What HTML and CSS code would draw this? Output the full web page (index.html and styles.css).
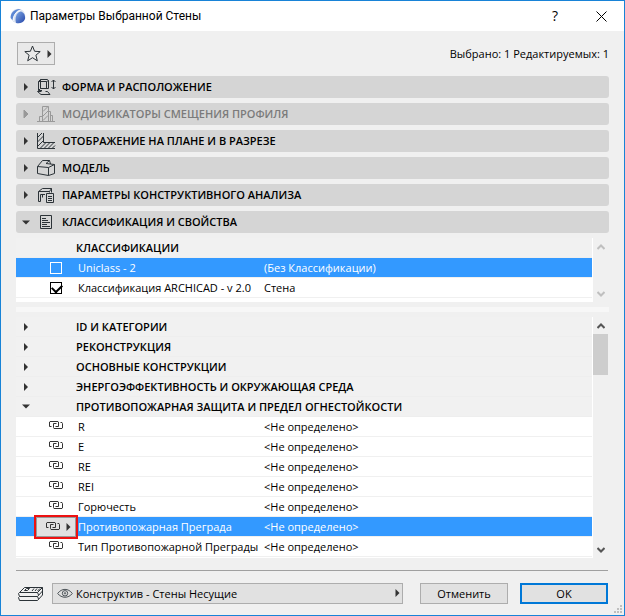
FILE: index.html
```html
<!DOCTYPE html>
<html lang="ru">
<head>
    <meta charset="UTF-8">
    <meta name="viewport" content="width=device-width, initial-scale=1.0">
    <title>Параметры Выбранной Стены</title>
    <link rel="stylesheet" href="styles.css">
</head>
<body>
    <!-- shared icons -->
    <svg class="sprite" width="0" height="0" aria-hidden="true">
        <symbol id="arrow-right" viewBox="0 0 5 8"><path d="M0.5 0 L4.5 4 L0.5 8 Z" fill="currentColor"/></symbol>
        <symbol id="arrow-down" viewBox="0 0 8 5"><path d="M0 0.5 L8 0.5 L4 4.5 Z" fill="currentColor"/></symbol>
        <symbol id="link" viewBox="0 0 14 8">
            <path d="M2.5 5.5 H0.5 V1 L1 0.5 H9 L9.5 1 V5.5 H6.5 M7.5 2.5 H4.5 V6.5 L5 7.5 H13 L13.5 7 V2.5 L13 1.5 H11.5" fill="none" stroke="currentColor"/>
        </symbol>
        <symbol id="chevron-up" viewBox="0 0 8 6"><path d="M0.5 5 L4 1.5 L7.5 5" fill="none" stroke="currentColor" stroke-width="2"/></symbol>
        <symbol id="chevron-down" viewBox="0 0 8 6"><path d="M0.5 1 L4 4.5 L7.5 1" fill="none" stroke="currentColor" stroke-width="2"/></symbol>
    </svg>

    <div class="dialog">
        <header class="titlebar">
            <svg class="logo" width="16" height="16" viewBox="0 0 16 16">
                <defs>
                    <linearGradient id="logo-fill" x1="0" y1="0" x2="1" y2="1">
                        <stop offset="0" stop-color="#7fa9e6"/>
                        <stop offset="1" stop-color="#2445a8"/>
                    </linearGradient>
                </defs>
                <circle cx="8" cy="8" r="7.3" fill="#dbe3f1"/>
                <path d="M6 15 C4.5 10 6.5 4.5 10.5 3.5 C14 4 15.6 8 15 11 C13.5 15 9.5 15.8 6 15 Z" fill="url(#logo-fill)"/>
                <path d="M0.6 10 C0.5 4 5.5 0.3 11 1 C6.5 2.5 3.5 6 2.8 12.5 Z" fill="#5b86d3"/>
                <path d="M3 13 C3.2 7.5 6 3.5 10.5 2.6" fill="none" stroke="#fff" stroke-width="0.9"/>
            </svg>
            <h1>Параметры Выбранной Стены</h1>
            <button class="window-button" aria-label="Справка">?</button>
            <button class="window-button" aria-label="Закрыть">
                <svg width="11" height="11" viewBox="0 0 11 11"><path d="M0.5 0.5 L10.5 10.5 M10.5 0.5 L0.5 10.5" stroke="#000" fill="none"/></svg>
            </button>
        </header>

        <main class="content">
            <div class="toolbar">
                <button class="favorites" aria-label="Избранное">
                    <svg width="17" height="17" viewBox="0 0 17 17"><path d="M8.5 1 L10.6 6.3 L16.2 6.6 L11.9 10.2 L13.3 15.8 L8.5 12.7 L3.7 15.8 L5.1 10.2 L0.8 6.6 L6.4 6.3 Z" fill="none" stroke="#2c3338"/></svg>
                    <svg width="5" height="8"><use href="#arrow-right"/></svg>
                </button>
                <span>Выбрано: 1 Редактируемых: 1</span>
            </div>

            <div class="sections">
                <button class="section">
                    <svg class="marker" width="8" height="8"><use href="#arrow-right"/></svg>
                    <svg class="section-icon" width="19" height="18" viewBox="0 0 19 18">
                        <path d="M3.5 1.5 H10.5 L11.5 2.5 V10.5 H3.5 Z M3.5 1.5 L1.5 3.5 V12.5 L3.5 10.5 M1.5 3.5 H9.5 L11.5 2.5 M9.5 3.5 V10.5 M1.5 12.5 H5 M4.5 13.5 H0.5 L4 16.5 H13 L10.5 13.5 H8.5 M16.5 2 V11 M14.5 4 L16.5 2 L18.5 4 M14.5 9 L16.5 11 L18.5 9"/>
                    </svg>
                    Форма и расположение
                </button>
                <button class="section" disabled>
                    <svg class="marker" width="8" height="8"><use href="#arrow-right"/></svg>
                    <svg class="section-icon" width="19" height="18" viewBox="0 0 19 18">
                        <path d="M0 16.5 H18 M5.5 16 V1.5 H11.5 V16 M11.5 6.5 H13.5 V16 M13.5 10.5 H15.5 V16 M5.5 11.5 H2.5 V16 M6 6.5 L11 1.5 M6 11 L11 6 M6 15.5 L11 10.5"/>
                    </svg>
                    Модификаторы смещения профиля
                </button>
                <button class="section">
                    <svg class="marker" width="8" height="8"><use href="#arrow-right"/></svg>
                    <svg class="section-icon" width="19" height="18" viewBox="0 0 19 18">
                        <path d="M0.5 1 V16.5 H18 M6.5 1 V10.5 H18 M0.5 5.5 L5 1 M0.5 10 L6.5 4 M0.5 14.5 L6.5 8.5 M3.5 16 L9 10.5 M7.5 16 L13 10.5 M11.5 16 L17 10.5 M15.5 16 L18 13.5"/>
                    </svg>
                    Отображение на плане и в разрезе
                </button>
                <button class="section">
                    <svg class="marker" width="8" height="8"><use href="#arrow-right"/></svg>
                    <svg class="section-icon" width="19" height="18" viewBox="0 0 19 18">
                        <path d="M0.5 7.5 L5.5 1.5 H12.5 L9 4.5 L17.5 5.5 V14.5 L11.5 16.5 L0.5 14.5 Z M0.5 7.5 L11.5 8.5 V16.5 M11.5 8.5 L17.5 5.5 M12.5 1.5 L13.5 5"/>
                    </svg>
                    Модель
                </button>
                <button class="section">
                    <svg class="marker" width="8" height="8"><use href="#arrow-right"/></svg>
                    <svg class="section-icon" width="19" height="18" viewBox="0 0 19 18">
                        <path d="M1.5 5.5 L5.5 2.5 H14.5 L12.5 5.5 Z M1.5 5.5 V15.5 H3.5 V8.5 H8 M5.5 8.5 V11.5 M14.5 2.5 V6.5 M12.5 5.5 V6.5 M9.5 7.5 H16.5 V16.5 H9.5 Z M11 10.5 H15 M11 12.5 H15 M11 14.5 H15"/>
                    </svg>
                    Параметры конструктивного анализа
                </button>
                <button class="section" aria-expanded="true">
                    <svg class="marker" width="8" height="5"><use href="#arrow-down"/></svg>
                    <svg class="section-icon" width="19" height="18" viewBox="0 0 19 18">
                        <path d="M3.5 2.5 H14.5 V15.5 H3.5 Z M5 5.5 H9 M5 7.5 H11 M5 9.5 H13 M5 11.5 H10 M5 13.5 H13"/>
                    </svg>
                    Классификация и свойства
                </button>
            </div>

            <div class="list classifications">
                <table>
                    <tbody>
                        <tr class="group"><td class="tool"></td><th colspan="2">Классификации</th></tr>
                        <tr class="selected">
                            <td class="tool"><input type="checkbox" id="uniclass"></td>
                            <td class="name"><label for="uniclass">Uniclass - 2</label></td>
                            <td>(Без Классификации)</td>
                        </tr>
                        <tr>
                            <td class="tool"><input type="checkbox" id="archicad" checked></td>
                            <td class="name"><label for="archicad">Классификация ARCHICAD - v 2.0</label></td>
                            <td>Стена</td>
                        </tr>
                    </tbody>
                </table>
                <div class="scrollbar scrollbar-off">
                    <svg width="8" height="6"><use href="#chevron-up"/></svg>
                    <svg width="8" height="6"><use href="#chevron-down"/></svg>
                </div>
            </div>

            <div class="splitter"></div>

            <div class="list">
                <table>
                    <tbody>
                        <tr class="group"><td class="tool"><svg width="8" height="8"><use href="#arrow-right"/></svg></td><th colspan="2">ID и категории</th></tr>
                        <tr class="group"><td class="tool"><svg width="8" height="8"><use href="#arrow-right"/></svg></td><th colspan="2">Реконструкция</th></tr>
                        <tr class="group"><td class="tool"><svg width="8" height="8"><use href="#arrow-right"/></svg></td><th colspan="2">Основные конструкции</th></tr>
                        <tr class="group"><td class="tool"><svg width="8" height="8"><use href="#arrow-right"/></svg></td><th colspan="2">Энергоэффективность и окружающая среда</th></tr>
                        <tr class="group"><td class="tool"><svg width="8" height="5"><use href="#arrow-down"/></svg></td><th colspan="2">Противопожарная защита и предел огнестойкости</th></tr>
                        <tr><td class="tool"><svg class="link" width="14" height="8"><use href="#link"/></svg></td><td class="name">R</td><td>&lt;Не определено&gt;</td></tr>
                        <tr><td class="tool"><svg class="link" width="14" height="8"><use href="#link"/></svg></td><td class="name">E</td><td>&lt;Не определено&gt;</td></tr>
                        <tr><td class="tool"><svg class="link" width="14" height="8"><use href="#link"/></svg></td><td class="name">RE</td><td>&lt;Не определено&gt;</td></tr>
                        <tr><td class="tool"><svg class="link" width="14" height="8"><use href="#link"/></svg></td><td class="name">REI</td><td>&lt;Не определено&gt;</td></tr>
                        <tr><td class="tool"><svg class="link" width="14" height="8"><use href="#link"/></svg></td><td class="name">Горючесть</td><td>&lt;Не определено&gt;</td></tr>
                        <tr class="selected">
                            <td class="tool">
                                <button class="link-button" aria-label="Связь свойства">
                                    <svg class="link" width="14" height="8"><use href="#link"/></svg>
                                    <svg width="5" height="8"><use href="#arrow-right"/></svg>
                                </button>
                            </td>
                            <td class="name">Противопожарная Преграда</td>
                            <td>&lt;Не определено&gt;</td>
                        </tr>
                        <tr><td class="tool"><svg class="link" width="14" height="8"><use href="#link"/></svg></td><td class="name">Тип Противопожарной Преграды</td><td>&lt;Не определено&gt;</td></tr>
                    </tbody>
                </table>
                <div class="scrollbar">
                    <svg width="8" height="6"><use href="#chevron-up"/></svg>
                    <div class="thumb"></div>
                    <svg width="8" height="6"><use href="#chevron-down"/></svg>
                </div>
            </div>

            <footer class="footer">
                <svg class="layers" width="26" height="16" viewBox="0 0 26 16" fill="none" stroke="#2c3338">
                    <path d="M6.5 1.5 H24.5 L19.5 6.5 H1.5 Z M1.5 6.5 L0.5 7.5 L1.5 10.5 H19.5 L24.5 5 V1.5 M1.5 10.5 L0.5 11.5 L1.5 14.5 H19.5 L24.5 9 V5 M8.5 2.5 H11.5 L9.5 4.5 H6.5 Z M16 2.5 L14 5 M19 2.5 L17 5 M22 2.5 L19.5 5 M19.5 6.5 L20.5 9 M19.5 10.5 L20.5 13"/>
                </svg>
                <div class="layer-field">
                    <svg class="eye" width="16" height="11" viewBox="0 0 16 11" fill="none" stroke="#4d5459">
                        <path d="M0.7 5.5 C4.5 0 11.5 0 15.3 5.5 C11.5 10.5 4.5 10.5 0.7 5.5 Z"/>
                        <circle cx="8" cy="5.3" r="2.7"/>
                        <circle cx="8" cy="5.3" r="0.7"/>
                    </svg>
                    <select aria-label="Слой">
                        <option>Конструктив - Стены Несущие</option>
                    </select>
                    <svg class="layer-arrow" width="5" height="8"><use href="#arrow-right"/></svg>
                </div>
                <button class="action">Отменить</button>
                <button class="action action-default">OK</button>
            </footer>
        </main>

        <svg class="grip" width="8" height="8" viewBox="0 0 8 8" fill="#bfbfbf">
            <path d="M6 0h2v2h-2z M3 3h2v2h-2z M6 3h2v2h-2z M0 6h2v2h-2z M3 6h2v2h-2z M6 6h2v2h-2z"/>
        </svg>
    </div>
</body>
</html>
```

FILE: styles.css
```css
* {
    box-sizing: border-box;
}

body {
    margin: 0;
    font-family: "Open Sans", "Noto Sans", sans-serif;
    font-size: 11px;
    line-height: 16px;
    color: #000;
    background-color: #f0f0f0;
}

button,
select {
    font: inherit;
    color: inherit;
    margin: 0;
}

svg {
    display: block;
    flex: none;
}

.sprite {
    position: absolute;
}

.dialog {
    position: relative;
    min-height: 100vh;
    border: 1px solid #1883d7;
    background-color: #f0f0f0;
}

/* title bar */
.titlebar {
    display: flex;
    align-items: center;
    height: 30px;
    padding-left: 9px;
    background-color: #fff;
}

.titlebar h1 {
    flex: 1;
    margin: 0 0 0 4px;
    font-family: Roboto, "Open Sans", sans-serif;
    font-size: 12px;
    font-weight: normal;
}

.window-button {
    display: flex;
    align-items: center;
    justify-content: center;
    width: 46px;
    height: 30px;
    padding: 0;
    border: none;
    background: none;
    font-size: 14px;
}

.content {
    padding: 11px 15px 0;
}

.toolbar {
    display: flex;
    align-items: center;
    justify-content: space-between;
    padding-left: 1px;
}

.favorites {
    display: flex;
    align-items: center;
    gap: 6px;
    width: 38px;
    height: 23px;
    padding: 0 6px;
    border: 1px solid #adadad;
    background-color: #e9e9e9;
    color: #333;
}

/* collapsible sections */
.sections {
    display: flex;
    flex-direction: column;
    gap: 5px;
    margin: 11px 0 5px;
}

.section {
    display: flex;
    align-items: center;
    height: 22px;
    padding: 0 8px;
    border: none;
    border-radius: 3px;
    background-color: #d5d5d5;
    font-weight: 600;
    text-transform: uppercase;
    white-space: nowrap;
}

.section:disabled {
    color: #7b7b7b;
}

.marker {
    margin: 0 5px 0 -2px;
    color: #333;
}

.section-icon {
    margin: 0 6px 0 2px;
    fill: none;
    stroke: #2c3338;
}

.section:disabled .marker,
.section:disabled .section-icon {
    color: #999;
    stroke: #999;
}

/* lists */
.list {
    display: flex;
    padding-right: 1px;
}

.list table {
    flex: 1;
    table-layout: fixed;
    border-spacing: 0;
    background-color: #fff;
    border-right: 1px solid #fff;
    border-bottom: 1px solid #fff;
}

.classifications table {
    border-bottom-width: 4px;
}

.list td,
.list th {
    height: 20px;
    padding: 0;
    border-bottom: 1px solid #f0f0f0;
    font-size: 11px;
    text-align: left;
    white-space: nowrap;
}

.list .group td,
.list .group th {
    background-color: #f1f1f1;
    border-bottom-color: #eee;
}

.list th {
    font-weight: 600;
    text-transform: uppercase;
}

.list .selected td {
    background-color: #3399ff;
    background-clip: padding-box;
    color: #fff;
}

.list .tool {
    position: relative;
    width: 60px;
    padding-left: 33px;
    color: #333;
}

.list .group .tool {
    padding-left: 6px;
}

.list .name {
    width: 188px;
    padding-left: 2px;
}

.link {
    margin-bottom: 3px;
}

.list input {
    display: block;
    appearance: none;
    width: 12px;
    height: 12px;
    margin: 0 0 0 1px;
    border: 1px solid #000;
    background-color: #fff;
}

.list .selected input {
    border-color: #fff;
    background-color: #3399ff;
}

.list input:checked::before {
    content: "";
    display: block;
    width: 8px;
    height: 5px;
    margin: 1px;
    border: solid #000;
    border-width: 0 0 2px 2px;
    transform: rotate(-45deg);
}

.link-button {
    position: absolute;
    top: 0;
    left: 20px;
    display: flex;
    align-items: center;
    gap: 6px;
    width: 40px;
    height: 20px;
    padding: 0 9px;
    border: 1px solid #999;
    background-color: #e1e1e1;
    outline: 2px solid #ed1111;
    color: #333;
}

.scrollbar {
    display: flex;
    flex-direction: column;
    align-items: center;
    width: 15px;
    padding: 6px 0 5px;
    color: #555;
}

.scrollbar svg:last-child {
    margin-top: auto;
}

.scrollbar-off {
    color: #bfbfbf;
}

.thumb {
    width: 100%;
    height: 41px;
    margin-top: 5px;
    background-color: #cdcdcd;
}

.splitter {
    height: 5px;
    margin: 5px 0;
    background-color: #f7f7f7;
}

/* footer */
.footer {
    display: flex;
    align-items: center;
    margin: 12px 1px 0 0;
    padding-top: 12px;
    border-top: 1px solid #a0a0a0;
}

.layers {
    margin: 0 8px 0 2px;
}

.layer-field {
    position: relative;
    flex: 1;
    margin-right: 17px;
}

.layer-field select {
    display: block;
    appearance: none;
    width: 100%;
    height: 21px;
    padding: 0 20px 0 23px;
    border: 1px solid #adadad;
    border-radius: 0;
    background-color: #e1e1e1;
}

.eye {
    position: absolute;
    top: 5px;
    left: 5px;
}

.layer-arrow {
    position: absolute;
    top: 6px;
    right: 3px;
    color: #333;
}

.action {
    width: 88px;
    height: 21px;
    padding: 0;
    border: 1px solid #adadad;
    background-color: #e1e1e1;
}

.action-default {
    margin-left: 12px;
    border: 2px solid #0078d7;
}

.grip {
    position: absolute;
    right: 2px;
    bottom: 2px;
}
```
